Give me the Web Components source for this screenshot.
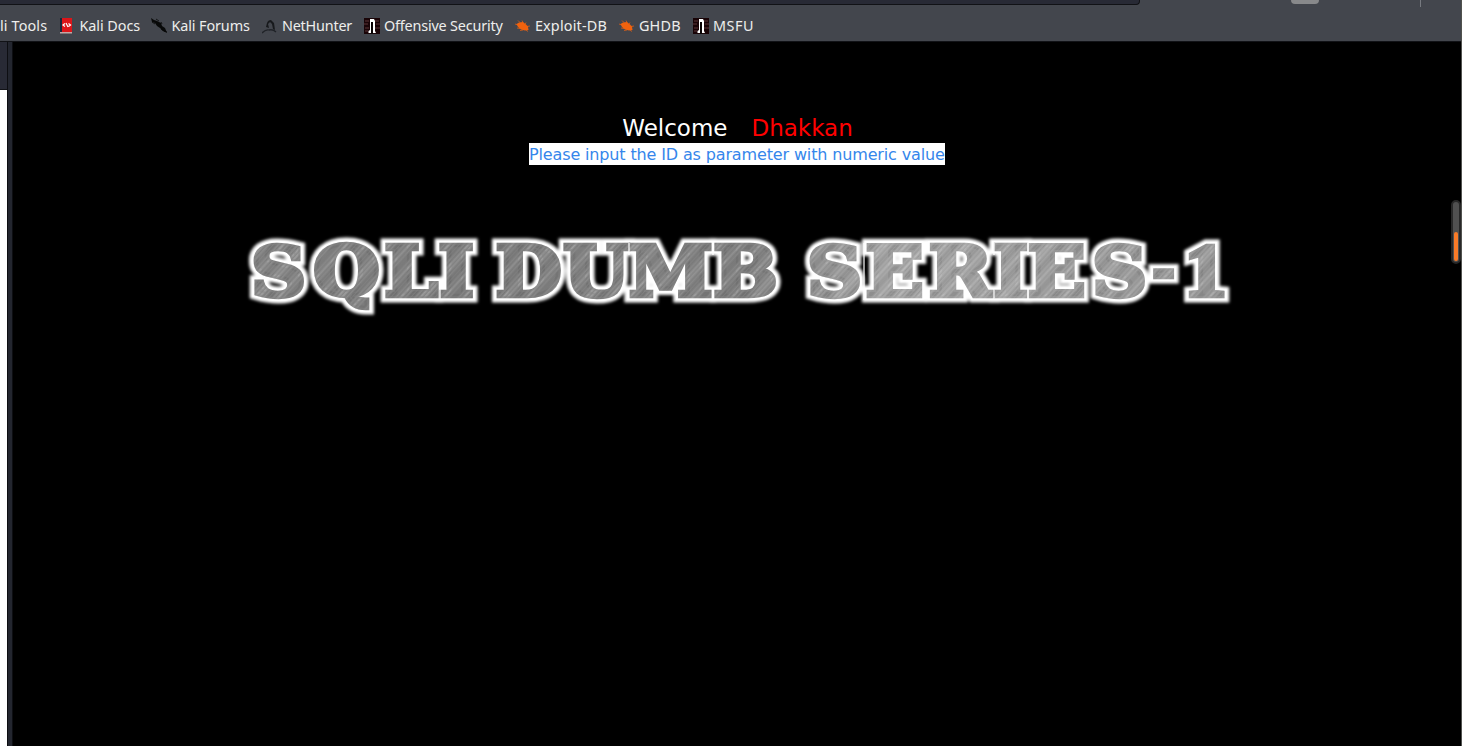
<!DOCTYPE html>
<html lang="en"><head><meta charset="utf-8"><title>SQLi</title>
<style>html,body{margin:0;height:100%;background:#000;overflow:hidden}</style></head>
<body><browser-window></browser-window>
<script>
const icons={
 docs:`<rect x="1" y="0" width="12" height="15" fill="#19283b"/><path d="M3 0h10v14H3z" fill="#dc1519"/><path d="M1 14h12v1.5H1z" fill="#c5a6a4"/><path d="M6 5.500 4 7l2 1.500M9.500 5.500l2 1.500-2 1.500M7 5l2 4" stroke="#fff" stroke-width="1.2" fill="none"/>`,
 forums:`<path d="M0 0 3 2 6 3 8 4 10 5 11 8 14 10 16 15 12 13 9 10 6 8 4 5 1 4z" fill="#080909"/><path d="m5 1 3 2M1 4l3 2m6-2 1 2m-1 5 3 2 3 1" stroke="#080909" stroke-width=".8"/>`,
 hunter:`<path d="M4 9 5 5q1-3 4-3l3 3 1 7-2-1-1-5-2-2-2 2 1 4z" fill="#17191c"/><path d="M0 15q4-4 7-3 4-1 7 2" stroke="#202328" stroke-width="1.3" fill="none"/>`,
 sec:`<path d="M0 0h16v16H0z" fill="#190407"/><path d="M1 3h4m6 0h4M0 6h4m8 0h4M1 10h4m6 0h5M1 13h3" stroke="#5c3539"/><path d="M6 1h4l1 2v10l1 2H9V4H7v11H4.5V13L6 12z" fill="#fff"/><path d="M7.2 4h1.5v12H7z" fill="#070303"/>`,
 bug:`<path d="M1.500 6 4 4.500l4-.5 3 2.500 2 2 .5 3.500-3.500.500-4-1-3-2.500z" fill="#f1620e"/><path d="m5 4.500-2-2m5 2-1-2m3 4 1-2m1 4 3-.5M11 12l2 1.500M8 12l-3 .5M5 10.500 2 10M3 7 0 6" stroke="#f1620e" stroke-width=".7"/>`
};
customElements.define('bookmark-item',class extends HTMLElement{connectedCallback(){
 const icon=this.getAttribute('icon'), space=this.getAttribute('tracking')||0;
 this.attachShadow({mode:'open'}).innerHTML=`<style>:host{display:flex;flex:none;align-items:center;height:34px;white-space:nowrap;color:#eeeeec;font:14.4px "Noto Sans",sans-serif;letter-spacing:${space}px}svg{width:16px;height:16px;flex:none;margin-right:4px}span{display:block;margin-top:-2px}</style>${icon?`<svg viewBox="0 0 16 16">${icons[icon]}</svg>`:''}<span><slot></slot></span>`;
}});
customElements.define('browser-toolbar',class extends HTMLElement{connectedCallback(){
 this.attachShadow({mode:'open'}).innerHTML=`<style>
 :host{display:block;height:42px;box-sizing:border-box;background:#43464d;border-bottom:1px solid #111216;overflow:hidden}
 .top{height:7px;display:flex;align-items:flex-start}.url{width:1139px;height:4px;background:#282a35;border:solid #111216;border-width:0 1px 1px 0;border-radius:0 0 4px 0}
 .tab{width:28px;height:4px;margin-left:151px;background:#88898b;border-radius:0 0 4px 4px}.line{width:1px;height:7px;margin-left:101px;background:#777a80}
 .bar{display:grid;grid-template-columns:59.400px 92px 110.500px 102px 151px 104px 74px auto;height:34px;margin-top:2px}
 </style><div class="top"><div class="url"></div><div class="tab"></div><div class="line"></div></div><div class="bar">
 <bookmark-item tracking=".12">li Tools</bookmark-item><bookmark-item icon="docs" tracking="-.05">Kali Docs</bookmark-item><bookmark-item icon="forums" tracking="-.1">Kali Forums</bookmark-item><bookmark-item icon="hunter" tracking="-.2">NetHunter</bookmark-item><bookmark-item icon="sec" tracking="-.17">Offensive Security</bookmark-item><bookmark-item icon="bug" tracking=".18">Exploit-DB</bookmark-item><bookmark-item icon="bug" tracking=".2">GHDB</bookmark-item><bookmark-item icon="sec" tracking=".55">MSFU</bookmark-item></div>`;
}});
customElements.define('metal-title',class extends HTMLElement{connectedCallback(){
 const centers=[279,347,411.5,456.5,484,529,597,671,746,790,835,895,961,1011,1057,1120,1164,1206].map(x=>((x-238.5)/1.09).toFixed(2)).join(' ');
 let lines='';
 for(let i=0;i<97;i++){const c=(i*i*17+i*7)%23;lines+=`<path d="M${i}.5 0v97" stroke="${c%2?'#fff':'#000'}" stroke-opacity="${(c%7)*.022}"/>`;}
 this.attachShadow({mode:'open'}).innerHTML=`<style>:host{display:block;width:1000px;height:100px}svg{display:block;overflow:visible}text{font:bold 70px "DejaVu Serif",serif;text-anchor:middle;stroke-linejoin:miter;stroke-miterlimit:2}.dash{font-size:48px}.one{font-family:"Liberation Serif",serif;font-size:77px}</style>
 <svg width="1000" height="100" viewBox="0 0 1000 100"><defs>
 <linearGradient id="metal" gradientUnits="userSpaceOnUse" x1="0" y1="0" x2="920" y2="0"><stop stop-color="#888"/><stop offset=".25" stop-color="#808080"/><stop offset=".4" stop-color="#888"/><stop offset=".5" stop-color="#828282"/><stop offset=".65" stop-color="#a8a8a8"/><stop offset="1" stop-color="#989898"/></linearGradient>
 <pattern id="brush" width="97" height="97" patternUnits="userSpaceOnUse" patternTransform="rotate(40) scale(.6)">${lines}</pattern>
 <filter id="glow" x="-5%" y="-30%" width="110%" height="160%"><feGaussianBlur stdDeviation="1.5"/></filter></defs>
 <g transform="scale(1.09 1)"><use href="#t" fill="#fff" stroke="#fff" stroke-width="13" filter="url(#glow)"/><use href="#t" fill="#fff" stroke="#fff" stroke-width="8"/>
 <text id="t" x="${centers}" y="69.5">SQLI DUMB SERIES<tspan class="dash" dy="-9">-</tspan><tspan class="one" dy="9">1</tspan></text><use href="#t" fill="url(#metal)" stroke="url(#metal)" stroke-width="4.5"/><use href="#t" fill="url(#brush)" stroke="url(#brush)" stroke-width="4.5"/></g>
 <path d="M202 53v20M391 16v12m0 33v12M475 16v12m0 33v12M626 16v57M756 16v12m0 33v12M790 16v12m0 33v12" stroke="#fff" stroke-width="1.2"/></svg>`;
}});
customElements.define('lesson-page',class extends HTMLElement{connectedCallback(){
 this.attachShadow({mode:'open'}).innerHTML=`<style>:host{display:flex;flex:1;flex-direction:column;align-items:center;background:#000;font-family:"DejaVu Sans",sans-serif}
 .welcome{margin-top:72px;height:29px;line-height:29px;font-size:23px;color:#fff;white-space:pre}.name{color:#f00;margin-left:24px}
 .hint{box-sizing:border-box;width:416px;height:22px;margin-right:1px;padding-top:1px;line-height:22px;font-size:16px;letter-spacing:-.14px;background:#fff;color:#3586eb;white-space:nowrap}metal-title{margin-top:62px}</style>
 <div class="welcome">Welcome<span class="name">Dhakkan</span></div><div class="hint">Please input the ID as parameter with numeric value</div><metal-title></metal-title>`;
}});
customElements.define('browser-window',class extends HTMLElement{connectedCallback(){
 this.attachShadow({mode:'open'}).innerHTML=`<style>:host{display:flex;flex-direction:column;position:relative;width:1462px;height:746px;overflow:hidden}
 .body{display:flex;height:704px}.left{width:7px;background:#fff}.left div{height:47px;background:#282a35;border-bottom:1px solid #111216}.split{box-sizing:border-box;width:6px;background:#23262f;border:solid #0d0e12;border-width:0 1px}
 .edge{position:absolute;right:0;top:0;width:1px;height:746px;background:#51524f}
 .meter{position:absolute;left:1451px;top:200px;box-sizing:border-box;width:10px;height:64px;border:2px solid #282828;border-radius:5px;background:#505050}
 .meter div{position:absolute;left:1px;bottom:1px;width:4px;height:29px;border-radius:2px;background:#fa7b28}</style>
 <browser-toolbar></browser-toolbar><div class="body"><div class="left"><div></div></div><div class="split"></div><lesson-page></lesson-page></div><div class="edge"></div><div class="meter"><div></div></div>`;
}});
</script></body></html>
